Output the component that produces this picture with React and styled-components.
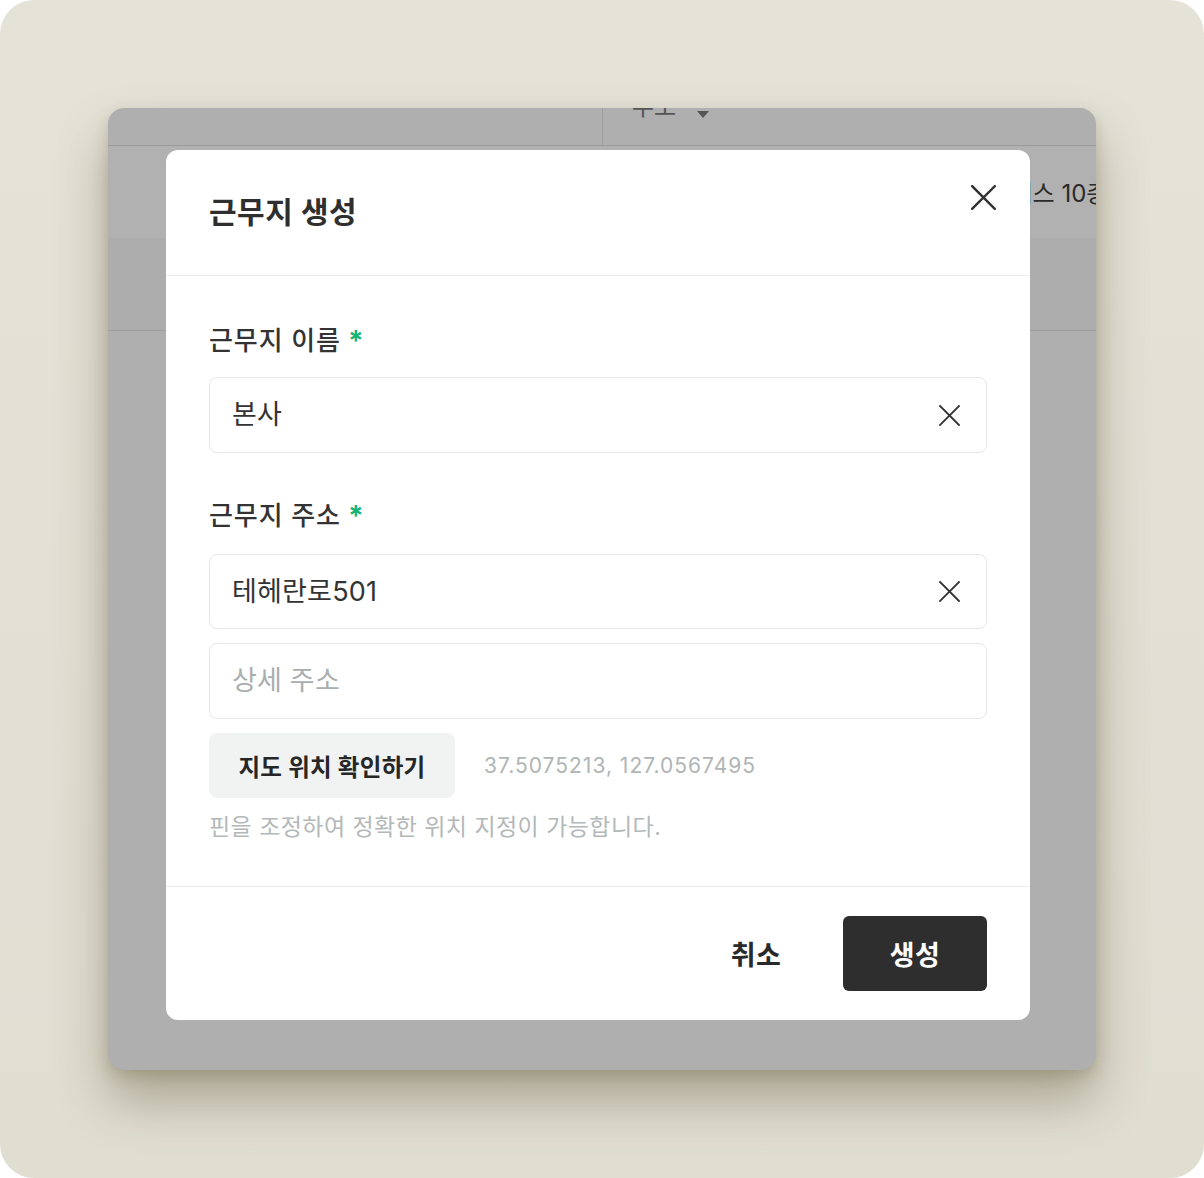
import React from 'react';
import styled, { createGlobalStyle } from 'styled-components';

const GlobalStyle = createGlobalStyle`
  html, body {
    margin: 0;
    padding: 0;
    background: #ffffff;
  }
  * {
    box-sizing: border-box;
  }
  body {
    font-family: "Inter", "Noto Sans CJK KR", "Noto Sans", sans-serif;
    -webkit-font-smoothing: antialiased;
  }
`;

const Frame = styled.div`
  width: 1204px;
  height: 1178px;
  border-radius: 34px;
  background: linear-gradient(180deg, #e5e2d8 0%, #e0ddd1 100%);
  padding: 108px;
  overflow: hidden;
`;

const Screen = styled.div`
  position: relative;
  height: 962px;
  border-radius: 16px;
  background: #afafaf;
  overflow: hidden;
  box-shadow: 0 30px 50px rgba(95, 85, 55, 0.42), 0 6px 14px rgba(95, 85, 55, 0.22);
`;

/* table that sits behind the dimmed overlay */
const Table = styled.div`
  display: flex;
  flex-direction: column;
`;

const HeadRow = styled.div`
  display: grid;
  grid-template-columns: 494px 1fr;
  height: 38px;
  border-bottom: 1px solid #9a9a9a;
`;

const HeadCell = styled.div`
  display: flex;
  align-items: flex-start;
  gap: 21px;
  padding-left: ${p => p.$pad || 0}px;
  border-left: ${p => (p.$divider ? '1px solid #9e9e9e' : 'none')};
  font-size: 24px;
  line-height: 24px;
  color: #555555;
  margin-top: -13px;
`;

const Caret = styled.span`
  margin-top: 16px;
  width: 0;
  height: 0;
  border-left: 6px solid transparent;
  border-right: 6px solid transparent;
  border-top: 7px solid #555555;
`;

const BodyRow = styled.div`
  display: grid;
  grid-template-columns: 494px 1fr;
  height: 185px;
  border-bottom: 1px solid #9e9e9e;
  background: linear-gradient(180deg, #b1b1b1 0, #b1b1b1 92px, #adadad 92px, #adadad 100%);
`;

const Cell = styled.div`
  padding: 31px 0 0 ${p => p.$pad || 0}px;
  font-size: 24px;
  line-height: 34px;
  color: #2a2a2a;
  white-space: nowrap;
  overflow: hidden;
`;

/* dialog */
const Dialog = styled.div`
  position: absolute;
  left: 58px;
  top: 42px;
  width: 864px;
  height: 870px;
  background: #ffffff;
  border-radius: 12px;
  display: flex;
  flex-direction: column;
`;

const DialogHeader = styled.div`
  position: relative;
  padding: 42px 43px 43px;
  border-bottom: 1px solid #ececec;
`;

const Title = styled.h2`
  margin: 0;
  font-size: 30px;
  line-height: 40px;
  font-weight: 700;
  color: #2f2f2f;
  letter-spacing: 0.5px;
`;

const CloseButton = styled.button`
  position: absolute;
  top: 35px;
  right: 34px;
  width: 25px;
  height: 25px;
  padding: 0;
  border: 0;
  background: none;
  display: flex;
  cursor: pointer;
`;

const DialogBody = styled.div`
  flex: 1;
  padding: 48px 43px 0;
  display: flex;
  flex-direction: column;
`;

const Label = styled.div`
  display: flex;
  align-items: center;
  font-size: 26px;
  line-height: 34px;
  font-weight: 500;
  color: #333333;
  letter-spacing: 0.9px;
  margin-top: ${p => p.$top || 0}px;
  margin-bottom: ${p => p.$bottom || 19}px;
`;

const Required = styled.span`
  margin-left: 7px;
  color: #15b374;
  font-size: 28px;
  font-weight: 700;
  letter-spacing: 0;
`;

const Field = styled.div`
  display: flex;
  align-items: center;
  height: ${p => p.$h || 76}px;
  margin-top: ${p => p.$top || 0}px;
  padding: 0 26px 0 22px;
  border: 1px solid #e6e7e7;
  border-radius: 8px;
`;

const FieldText = styled.span`
  flex: 1;
  font-size: 27px;
  line-height: 34px;
  color: ${p => (p.$placeholder ? '#a8aeae' : '#333333')};
  letter-spacing: 0.2px;
`;

const ClearIcon = styled.svg`
  width: 21px;
  height: 21px;
  flex: none;
`;

const MapRow = styled.div`
  display: flex;
  align-items: center;
  gap: 29px;
  margin-top: 14px;
`;

const MapButton = styled.button`
  height: 65px;
  width: 246px;
  padding: 0;
  border: 0;
  border-radius: 8px;
  background: #f1f2f2;
  font-family: inherit;
  font-size: 23.5px;
  font-weight: 700;
  letter-spacing: 0.3px;
  color: #262626;
  cursor: pointer;
`;

const Coords = styled.span`
  font-size: 21px;
  letter-spacing: 1px;
  color: #b0b5b5;
`;

const Hint = styled.p`
  margin: 13px 0 0;
  font-size: 23px;
  line-height: 32px;
  letter-spacing: 0.45px;
  color: #b3b8b8;
`;

const DialogFooter = styled.div`
  display: flex;
  justify-content: flex-end;
  gap: 15px;
  padding: 29px 43px;
  border-top: 1px solid #ececec;
`;

const FooterButton = styled.button`
  width: 144px;
  height: 75px;
  padding: 0;
  border: 0;
  border-radius: 6px;
  font-family: inherit;
  font-size: 27px;
  font-weight: 700;
  letter-spacing: 0.5px;
  background: ${p => (p.$primary ? '#2e2e2e' : 'transparent')};
  color: ${p => (p.$primary ? '#ffffff' : '#2a2a2a')};
  cursor: pointer;
`;

const Cross = ({ size = 21, stroke = 1.8 }) => (
  <ClearIcon viewBox="0 0 21 21" style={{ width: size, height: size }}>
    <path d="M1 1 L20 20 M20 1 L1 20" stroke="#333" strokeWidth={stroke} fill="none" strokeLinecap="square" />
  </ClearIcon>
);

export default function App() {
  return (
    <>
      <GlobalStyle />
      <Frame>
        <Screen>
          <Table>
            <HeadRow>
              <HeadCell />
              <HeadCell $divider $pad={29}>
                주소
                <Caret />
              </HeadCell>
            </HeadRow>
            <BodyRow>
              <Cell />
              <Cell $pad={55}>서울시 강남구 테헤란로 501 브이플렉스 10층</Cell>
            </BodyRow>
          </Table>

          <Dialog>
            <DialogHeader>
              <Title>근무지 생성</Title>
              <CloseButton aria-label="닫기">
                <Cross size={25} stroke={2} />
              </CloseButton>
            </DialogHeader>

            <DialogBody>
              <Label>
                근무지 이름<Required>*</Required>
              </Label>
              <Field>
                <FieldText>본사</FieldText>
                <Cross />
              </Field>

              <Label $top={46} $bottom={21}>
                근무지 주소<Required>*</Required>
              </Label>
              <Field $h={75}>
                <FieldText>테헤란로501</FieldText>
                <Cross />
              </Field>
              <Field $top={14}>
                <FieldText $placeholder>상세 주소</FieldText>
              </Field>

              <MapRow>
                <MapButton>지도 위치 확인하기</MapButton>
                <Coords>37.5075213, 127.0567495</Coords>
              </MapRow>
              <Hint>핀을 조정하여 정확한 위치 지정이 가능합니다.</Hint>
            </DialogBody>

            <DialogFooter>
              <FooterButton>취소</FooterButton>
              <FooterButton $primary>생성</FooterButton>
            </DialogFooter>
          </Dialog>
        </Screen>
      </Frame>
    </>
  );
}
